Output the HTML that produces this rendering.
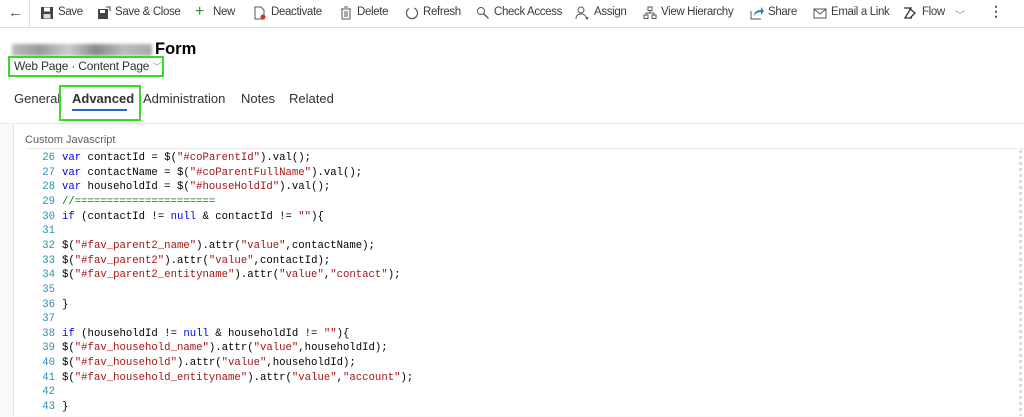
<!DOCTYPE html>
<html><head><style>
body{margin:0;width:1024px;height:416px;overflow:hidden;background:#fff;font-family:"Liberation Sans",sans-serif;color:#323130;position:relative}
.tb{position:absolute;top:0;left:0;width:1024px;height:27px;border-bottom:1px solid #e1dfdd;background:#fff}
.tb span{position:absolute;top:6px;font-size:11.5px;letter-spacing:-0.35px;color:#3b3a39;white-space:nowrap}
.ic{position:absolute;top:6px;width:14px;height:14px}
.sep{position:absolute;left:29px;top:0;width:1px;height:28px;background:#e1dfdd}
.title{position:absolute;left:12px;top:40px;font-size:16.5px;font-weight:600;color:#000}
.blur{display:inline-block;width:140px;height:12px;background:linear-gradient(90deg,#bbb,#999 20%,#ccc 40%,#888 60%,#bbb 80%,#aaa);filter:blur(1.5px);vertical-align:middle;margin-right:3px}
.box{position:absolute;border:2px solid #33dd22}
.sub{position:absolute;left:14px;top:59px;font-size:12px;letter-spacing:-0.2px;color:#323130}
.tabs span{position:absolute;top:91px;font-size:13px;color:#323130}
.bg{position:absolute;left:0;top:123px;width:1024px;height:293px;background:#faf9f8;border-top:1px solid #edebe9}
.card{position:absolute;left:13px;top:125px;width:1011px;height:291px;background:#fff;border-left:1px solid #e1dfdd}
.lbl{position:absolute;left:25px;top:134px;font-size:11px;color:#605e5c}
.code{position:absolute;left:27px;top:148px;width:997px;height:268px;border-top:1px solid #e8e8e8;font-family:"Liberation Mono",monospace;font-size:10.65px;white-space:pre;color:#000}
.ln{position:absolute;left:0;width:1000px;height:14.65px;line-height:14.65px}
.n{display:inline-block;width:28px;text-align:right;color:#2b91af;margin-right:7px}
.k{color:#0000ff}.s{color:#a31515}.c{color:#008000}
</style></head><body>
<div class="tb">
<span style="left:8px;top:4px;font-size:15px;color:#555">←</span>
<div class="sep"></div>
<svg class="ic" style="left:40px" viewBox="0 0 14 14"><rect x="1" y="1" width="12" height="12" fill="#444"/><rect x="4" y="1.5" width="6" height="4" fill="#fff"/><rect x="3.5" y="8" width="7" height="4.5" fill="#ddd"/></svg><span style="left:58px">Save</span>
<svg class="ic" style="left:97px" viewBox="0 0 14 14"><rect x="1" y="3" width="10" height="10" fill="#444"/><rect x="3" y="4" width="5" height="3" fill="#fff"/><path d="M9 1h4v4" stroke="#444" fill="none"/></svg><span style="left:115px">Save &amp; Close</span>
<span style="left:195px;top:3px;font-size:16px;color:#3a8a3a">+</span><span style="left:213px">New</span>
<svg class="ic" style="left:253px" viewBox="0 0 14 14"><path d="M2 1h6l3 3v9H2z" fill="none" stroke="#555"/><circle cx="10" cy="11" r="2.5" fill="#d13438"/></svg><span style="left:271px">Deactivate</span>
<svg class="ic" style="left:339px" viewBox="0 0 14 14"><path d="M3 3h8v10H3zM2 3h10M5 1h4" fill="none" stroke="#555"/><path d="M6 5v6M8 5v6" stroke="#555"/></svg><span style="left:357px">Delete</span>
<svg class="ic" style="left:405px" viewBox="0 0 14 14"><path d="M4 2.5A5.5 5.5 0 1 0 9 2" fill="none" stroke="#555" stroke-width="1.2"/></svg><span style="left:423px">Refresh</span>
<svg class="ic" style="left:476px" viewBox="0 0 14 14"><circle cx="5" cy="5" r="3.5" fill="none" stroke="#555"/><path d="M7.5 7.5l5 5" stroke="#555" stroke-width="1.3"/></svg><span style="left:494px">Check Access</span>
<svg class="ic" style="left:575px" viewBox="0 0 14 14"><circle cx="6" cy="4" r="3" fill="none" stroke="#555"/><path d="M1 13c0-4 2-5 5-5s4 1 5 3" fill="none" stroke="#555"/><circle cx="12" cy="12" r="1.3" fill="#555"/></svg><span style="left:594px">Assign</span>
<svg class="ic" style="left:643px" viewBox="0 0 14 14"><rect x="5" y="1" width="4" height="3.5" fill="none" stroke="#555"/><rect x="1" y="9" width="4" height="3.5" fill="none" stroke="#555"/><rect x="9" y="9" width="4" height="3.5" fill="none" stroke="#555"/><path d="M7 4.5v2.5M3 9V7h8v2" fill="none" stroke="#555"/></svg><span style="left:661px">View Hierarchy</span>
<svg class="ic" style="left:750px" viewBox="0 0 14 14"><path d="M1 5v8h10" fill="none" stroke="#555"/><path d="M4 10c0-4 3-6 7-6V1l3 4-3 4V6c-3 0-5 1-7 4z" fill="#2b78d4"/></svg><span style="left:768px">Share</span>
<svg class="ic" style="left:813px" viewBox="0 0 14 14"><rect x="1" y="3" width="12" height="9" fill="none" stroke="#555"/><path d="M1 3l6 5 6-5" fill="none" stroke="#555"/></svg><span style="left:831px">Email a Link</span>
<svg class="ic" style="left:903px" viewBox="0 0 14 14"><path d="M1 2h7l-6 10h7M6 2l6 5-5 5" fill="none" stroke="#333" stroke-width="1.3"/></svg><span style="left:922px">Flow</span>
<span style="left:955px;font-size:10px;top:7px;color:#888">﹀</span>
<span style="left:989px;font-weight:bold;top:3px;font-size:14px;color:#555">⋮</span>
</div>
<div class="title"><span class="blur"></span>Form</div>
<div class="box" style="left:8px;top:56px;width:152px;height:17px"></div>
<div class="sub">Web Page · Content Page <span style="color:#999;font-size:9px">﹀</span></div>
<div class="tabs">
<span style="left:14px">General</span>
<span style="left:72px;font-weight:600">Advanced</span>
<span style="left:143px">Administration</span>
<span style="left:241px">Notes</span>
<span style="left:289px">Related</span>
</div>
<div style="position:absolute;left:72px;top:109px;width:55px;height:2px;background:#2266cc"></div>
<div class="box" style="left:59px;top:85px;width:78px;height:32px"></div>
<div class="bg"></div>
<div class="card"></div>
<div class="lbl">Custom Javascript</div>
<div class="code">
<div class="ln" style="top:2px"><span class="n">26</span><span class="k">var</span> contactId = $(<span class="s">"#coParentId"</span>).val();</div>
<div class="ln" style="top:16.65px"><span class="n">27</span><span class="k">var</span> contactName = $(<span class="s">"#coParentFullName"</span>).val();</div>
<div class="ln" style="top:31.3px"><span class="n">28</span><span class="k">var</span> householdId = $(<span class="s">"#houseHoldId"</span>).val();</div>
<div class="ln" style="top:45.95px"><span class="n">29</span><span class="c">//======================</span></div>
<div class="ln" style="top:60.6px"><span class="n">30</span><span class="k">if</span> (contactId != <span class="k">null</span> &amp; contactId != <span class="s">""</span>){</div>
<div class="ln" style="top:75.25px"><span class="n">31</span></div>
<div class="ln" style="top:89.9px"><span class="n">32</span>$(<span class="s">"#fav_parent2_name"</span>).attr(<span class="s">"value"</span>,contactName);</div>
<div class="ln" style="top:104.55px"><span class="n">33</span>$(<span class="s">"#fav_parent2"</span>).attr(<span class="s">"value"</span>,contactId);</div>
<div class="ln" style="top:119.2px"><span class="n">34</span>$(<span class="s">"#fav_parent2_entityname"</span>).attr(<span class="s">"value"</span>,<span class="s">"contact"</span>);</div>
<div class="ln" style="top:133.85px"><span class="n">35</span></div>
<div class="ln" style="top:148.5px"><span class="n">36</span>}</div>
<div class="ln" style="top:163.15px"><span class="n">37</span></div>
<div class="ln" style="top:177.8px"><span class="n">38</span><span class="k">if</span> (householdId != <span class="k">null</span> &amp; householdId != <span class="s">""</span>){</div>
<div class="ln" style="top:192.45px"><span class="n">39</span>$(<span class="s">"#fav_household_name"</span>).attr(<span class="s">"value"</span>,householdId);</div>
<div class="ln" style="top:207.1px"><span class="n">40</span>$(<span class="s">"#fav_household"</span>).attr(<span class="s">"value"</span>,householdId);</div>
<div class="ln" style="top:221.75px"><span class="n">41</span>$(<span class="s">"#fav_household_entityname"</span>).attr(<span class="s">"value"</span>,<span class="s">"account"</span>);</div>
<div class="ln" style="top:236.4px"><span class="n">42</span></div>
<div class="ln" style="top:251.05px"><span class="n">43</span>}</div>
</div>
<div style="position:absolute;left:1019px;top:150px;width:3px;height:266px;background:repeating-linear-gradient(#ccc 0 3px,#fff 3px 6px);opacity:.7"></div>
</body></html>
